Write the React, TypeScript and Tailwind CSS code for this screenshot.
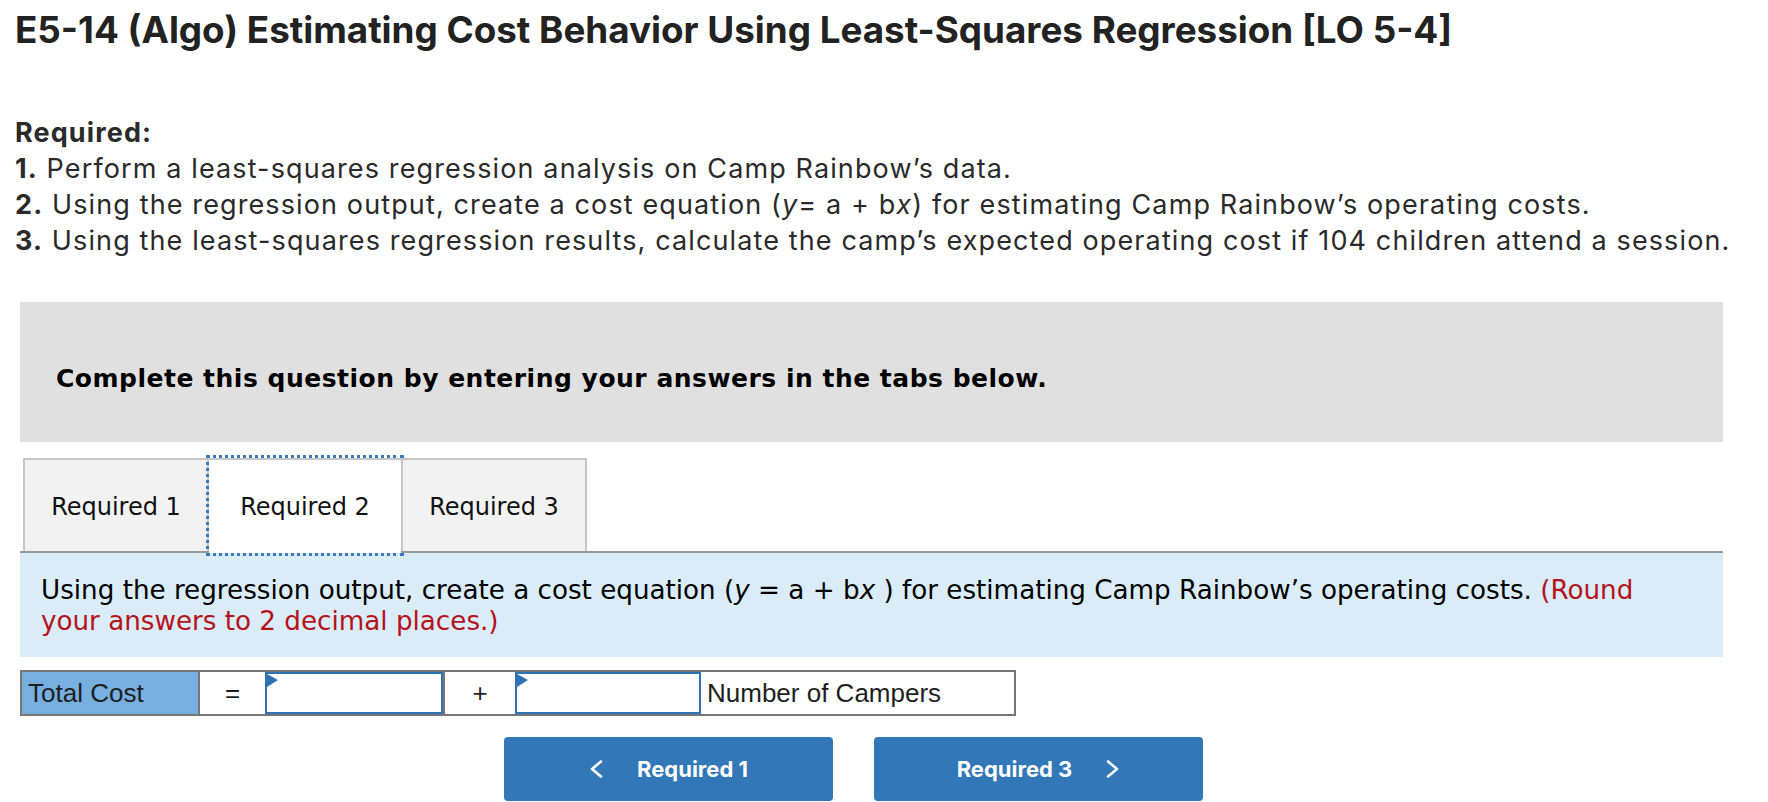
import React from "react";

function Tri() {
  return (
    <svg className="absolute left-0 top-0" width="11" height="14" viewBox="0 0 11 14">
      <polygon points="0,0 11,6 0,13" fill="#2e73b5" />
    </svg>
  );
}

function ChevL() {
  return (
    <svg width="14" height="18" viewBox="0 0 14 18" fill="none">
      <polyline points="12,1.5 3,9 12,16.5" stroke="white" strokeWidth="2.6" strokeLinecap="round" strokeLinejoin="round" />
    </svg>
  );
}
function ChevR() {
  return (
    <svg width="14" height="18" viewBox="0 0 14 18" fill="none">
      <polyline points="2,1.5 11,9 2,16.5" stroke="white" strokeWidth="2.6" strokeLinecap="round" strokeLinejoin="round" />
    </svg>
  );
}

export default function App() {
  return (
    <div className="w-[1768px] h-[802px] bg-white overflow-hidden">
      <div className="pl-[15px] pt-[8px] font-['Inter',sans-serif]">
        <h1 className="font-bold text-[36.8px] leading-[44px] text-[#222222]">
          E5-14 (Algo) Estimating Cost Behavior Using Least-Squares Regression [LO 5-4]
        </h1>
        <div className="mt-[63px] text-[27px] leading-[36px] tracking-[1.12px] text-[#2a2a2a]">
          <p className="font-bold">Required:</p>
          <p>
            <span className="font-bold">1.</span> Perform a least-squares regression analysis on Camp Rainbow’s data.
          </p>
          <p>
            <span className="font-bold">2.</span> Using the regression output, create a cost equation (<i>y</i>= a + b<i>x</i>) for estimating Camp Rainbow’s operating costs.
          </p>
          <p>
            <span className="font-bold">3.</span> Using the least-squares regression results, calculate the camp’s expected operating cost if 104 children attend a session.
          </p>
        </div>
      </div>

      <div className="mx-[20px] w-[1703px] mt-[43px] font-['DejaVu_Sans',sans-serif]">
        <div className="h-[140px] bg-[#e0e0e0] pl-[36px] pt-[62px] text-[25px] leading-[30px] tracking-[0.5px] font-bold text-black">
          Complete this question by entering your answers in the tabs below.
        </div>

        <div className="mt-[16px] flex pl-[3px] border-b-2 border-[#999999] h-[95px]">
          <div className="w-[186px] h-[93px] bg-[#f2f2f2] border-2 border-b-0 border-[#c6c6c6] flex items-center justify-center pt-[3px] text-[24px] text-[#111]">
            Required 1
          </div>
          <div className="w-[192px] h-[95px] bg-white border-t-2 border-[#c6c6c6] flex items-center justify-center pt-[1px] text-[24px] text-[#111] outline-3 outline-dotted outline-[#3a7bbf]">
            Required 2
          </div>
          <div className="w-[186px] h-[93px] bg-[#f2f2f2] border-2 border-b-0 border-[#c6c6c6] flex items-center justify-center pt-[3px] text-[24px] text-[#111]">
            Required 3
          </div>
        </div>

        <div className="bg-[#daecf8] h-[104px] pl-[21px] pr-[40px] pt-[22px] text-[26.2px] leading-[31px] text-black">
          Using the regression output, create a cost equation (<i>y</i> = a + b<i>x</i> ) for estimating Camp Rainbow’s operating costs.{" "}
          <span className="text-[#b5121b]">(Round your answers to 2 decimal places.)</span>
        </div>

        <div className="mt-[13px] flex w-[996px] h-[46px] border-2 border-[#767676] font-['Liberation_Sans',sans-serif] text-[26px] text-[#1e1e1e]">
          <div className="w-[178px] bg-[#78afe1] border-r-2 border-[#767676] pl-[6px] flex items-center">Total Cost</div>
          <div className="w-[65px] flex items-center justify-center">=</div>
          <div className="relative w-[178px] border-2 border-[#2e73b5] bg-white">
            <Tri />
          </div>
          <div className="w-[72px] border-l-2 border-[#767676] flex items-center justify-center">+</div>
          <div className="relative w-[186px] border-2 border-[#2e73b5] bg-white">
            <Tri />
          </div>
          <div className="flex-1 pl-[6px] flex items-center">Number of Campers</div>
        </div>

        <div className="mt-[21px] ml-[484px] flex gap-[41px] font-['Inter',sans-serif]">
          <div className="w-[329px] h-[64px] rounded-[4px] bg-[#3277b7] flex items-center justify-center gap-[34px] text-white font-bold text-[22px]">
            <ChevL />
            <span>Required 1</span>
          </div>
          <div className="w-[329px] h-[64px] rounded-[4px] bg-[#3277b7] flex items-center justify-center gap-[34px] text-white font-bold text-[22px]">
            <span>Required 3</span>
            <ChevR />
          </div>
        </div>
      </div>
    </div>
  );
}
